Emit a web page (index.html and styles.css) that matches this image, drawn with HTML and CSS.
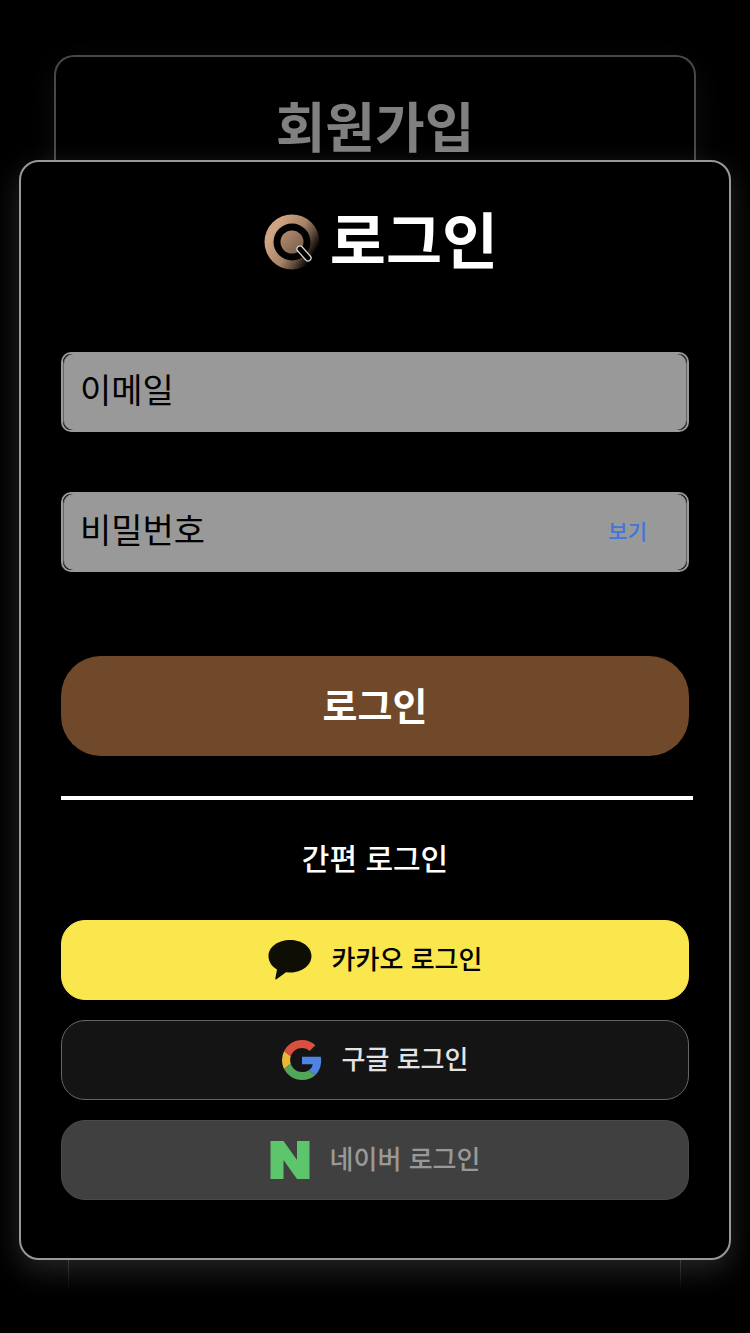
FILE: index.html
```html
<!DOCTYPE html>
<html lang="ko">
<head>
<meta charset="utf-8">
<meta name="viewport" content="width=device-width, initial-scale=1">
<title>로그인</title>
<link rel="stylesheet" href="styles.css">
</head>
<body>
<div class="stage">
  <section class="signup-card">
    <h2 class="signup-title">회원가입</h2>
  </section>
  <main class="login-modal">
    <header class="login-header">
      <svg class="logo" viewBox="0 0 56 56" aria-hidden="true">
        <defs>
          <linearGradient id="ring" gradientUnits="userSpaceOnUse" x1="10" y1="16" x2="50" y2="40">
            <stop offset="0" stop-color="#d0a482"/>
            <stop offset="0.5" stop-color="#a58268"/>
            <stop offset="0.75" stop-color="#5f4a3c"/>
            <stop offset="1" stop-color="#000"/>
          </linearGradient>
          <linearGradient id="core" x1="0" y1="0" x2="1" y2="1">
            <stop offset="0" stop-color="#b98f70"/>
            <stop offset="1" stop-color="#72594a"/>
          </linearGradient>
        </defs>
        <circle cx="28" cy="28" r="27.5" fill="url(#ring)"/>
        <circle cx="28" cy="28" r="18.5" fill="#000"/>
        <circle cx="28" cy="28" r="11.5" fill="url(#core)"/>
        <rect x="31" y="36.500" width="18" height="6" rx="3" transform="rotate(48 40 39.500)" fill="#000" stroke="#d8d4d0" stroke-width="1.300"/>
      </svg>
      <h1 class="login-title">로그인</h1>
    </header>
    <form class="login-form">
      <div class="field">
        <input class="field-input" id="email" type="email">
        <label class="field-label" for="email">이메일</label>
      </div>
      <div class="field">
        <input class="field-input" id="password" type="password">
        <label class="field-label" for="password">비밀번호</label>
        <button class="reveal" type="button">보기</button>
      </div>
      <button class="submit" type="submit">로그인</button>
    </form>
    <hr class="divider">
    <h2 class="social-title">간편 로그인</h2>
    <div class="social-list">
      <button class="social kakao" type="button">
        <svg class="kakao-icon" viewBox="0 0 44 42" aria-hidden="true">
          <path fill="#0f0e04" d="M22 1C10 1 .5 8 .5 17c0 6 3.500 10.500 8.500 13.500L7.300 39.500c-.2.800.6 1.200 1.200.8L18 33.300l4 .2c12 0 21.500-7.300 21.500-16.500S34 1 22 1z"/>
        </svg>
        <span class="social-label">카카오 로그인</span>
      </button>
      <button class="social google" type="button">
        <svg class="google-icon" viewBox="0 0 48 48" aria-hidden="true">
          <path fill="#e7b73a" d="M10.530 28.590A14.500 14.500 0 0 1 9.770 24c0-1.600.27-3.140.76-4.590l-7.980-6.190A23.900 23.900 0 0 0 0 24c0 3.880.92 7.540 2.560 10.780z"/>
          <path fill="#d95040" d="M24 9.500c3.540 0 6.710 1.220 9.210 3.600l6.850-6.850C35.900 2.380 30.470 0 24 0 14.620 0 6.510 5.380 2.560 13.220l7.980 6.190C12.430 13.720 17.740 9.500 24 9.500z"/>
          <path fill="#4f83e6" d="M46.980 24.550c0-1.570-.15-3.090-.38-4.550H24v9.020h12.940c-.58 2.960-2.260 5.480-4.780 7.180l7.730 6c4.510-4.180 7.090-10.360 7.090-17.650z"/>
          <path fill="#53a557" d="M24 48c6.480 0 11.930-2.130 15.890-5.810l-7.730-6c-2.150 1.450-4.920 2.300-8.160 2.300-6.260 0-11.570-4.220-13.470-9.910l-7.980 6.190C6.510 42.620 14.620 48 24 48z"/>
        </svg>
        <span class="social-label">구글 로그인</span>
      </button>
      <button class="social naver" type="button">
        <svg class="naver-icon" viewBox="0 0 40 40" aria-hidden="true">
          <path fill="#5dc66c" d="M0.500 1h13L27 20V1h12.500v38H27L13.500 20v19H.5z"/>
        </svg>
        <span class="social-label">네이버 로그인</span>
      </button>
    </div>
  </main>
</div>
</body>
</html>
```

FILE: styles.css
```css
* {
  box-sizing: border-box;
}

body {
  margin: 0;
  background: #000;
  color: #fff;
  font-family: "Noto Sans CJK KR", sans-serif;
}

button,
input {
  font-family: inherit;
}

/* The sign-up card and the login dialog share one grid cell */
.stage {
  display: grid;
  grid-template-columns: minmax(0, 1fr);
  min-height: 100vh;
}

.signup-card,
.login-modal {
  grid-area: 1 / 1;
  background: #000;
  border-radius: 20px;
}

.signup-card {
  margin: 55px 54px 40px;
  border: 2px solid #484848;
  border-bottom: 0;
  box-shadow: 0 10px 30px rgba(255, 255, 255, 0.06);
  clip-path: inset(-40px -40px 400px);
}

.signup-title {
  margin: 28px 0 0;
  color: #808080;
  font-size: 54px;
  font-weight: 700;
  line-height: 80px;
  text-align: center;
}

.stage::before {
  grid-area: 1 / 1;
  align-self: end;
  height: 120px;
  margin: 0 69px 40px 68px;
  border: solid;
  border-width: 0 1px;
  border-image: linear-gradient(#484848 50%, #000) 1;
  content: "";
}

.login-modal {
  z-index: 1;
  align-self: start;
  margin: 160px 19px 73px;
  padding: 38px 40px 58px;
  border: 2px solid #999;
  box-shadow: 0 10px 30px rgba(255, 255, 255, 0.15);
}

.login-header {
  display: flex;
  align-items: center;
  justify-content: center;
  gap: 10px;
  height: 84px;
  padding-left: 12px;
}

.logo {
  width: 56px;
  height: 56px;
}

.login-title {
  margin: 0;
  padding-bottom: 8px;
  font-size: 61px;
  font-weight: 700;
  line-height: 76px;
}

.login-form {
  display: grid;
  gap: 60px;
  margin-top: 68px;
}

.field {
  display: flex;
  position: relative;
  height: 80px;
  border: 2px solid #999;
  border-radius: 10px;
}

.field-input {
  flex: 1;
  min-width: 0;
  padding: 0 17px;
  border: solid #666;
  border-width: 0 1px;
  border-radius: 10px;
  outline: 0;
  background: #999;
  color: #000;
  font-size: 34px;
}

.field-label {
  position: absolute;
  top: 10px;
  left: 17px;
  color: #000;
  font-size: 34px;
  line-height: 50px;
}

.field-input:focus + .field-label {
  opacity: 0;
}

.reveal {
  position: absolute;
  top: 0;
  right: 40px;
  bottom: 4px;
  padding: 0;
  border: 0;
  background: none;
  color: #3f75dc;
  font-size: 21px;
  font-weight: 500;
}

.submit {
  height: 100px;
  margin-top: 24px;
  padding: 0 0 6px;
  border: 0;
  border-radius: 40px;
  background: #70482a;
  color: #fff;
  font-size: 38px;
  font-weight: 700;
}

.divider {
  width: calc(100% + 4px);
  height: 4px;
  margin: 40px 0 0;
  border: 0;
  background: #fff;
}

.social-title {
  margin: 33px 0 39px;
  font-size: 30px;
  font-weight: 500;
  line-height: 48px;
  text-align: center;
}

.social-list {
  display: grid;
  gap: 20px;
}

.social {
  display: flex;
  align-items: center;
  justify-content: center;
  gap: 20px;
  height: 80px;
  padding: 0;
  border: 1px solid;
  border-radius: 24px;
  font-size: 26px;
  font-weight: 500;
}

.social-label {
  padding-bottom: 6px;
}

.kakao {
  border-color: #fae64d;
  background: #fae64d;
  color: #000;
}

.google {
  border-color: #666;
  background: #141414;
  color: #e3e3e3;
}

.naver {
  border-color: #4a4a4a;
  background: #404040;
  color: #999;
}

.kakao-icon {
  width: 44px;
  height: 42px;
}

.google-icon,
.naver-icon {
  width: 40px;
  height: 40px;
}
```
